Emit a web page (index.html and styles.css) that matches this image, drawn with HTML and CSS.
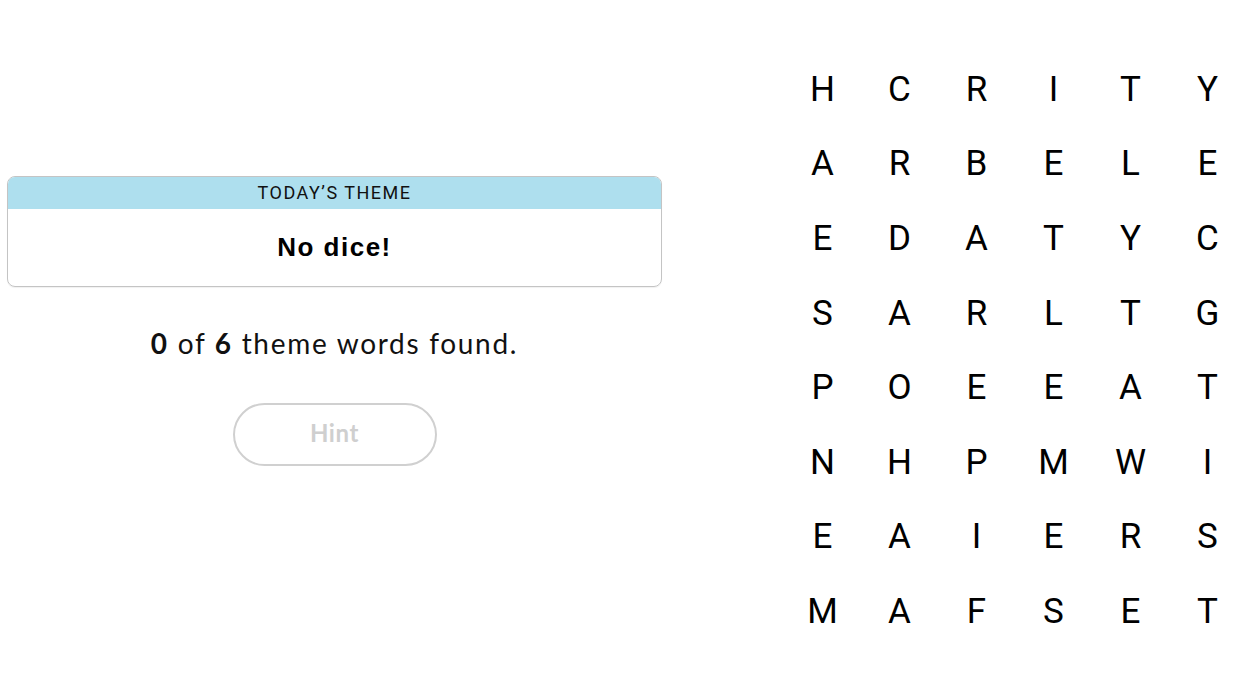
FILE: index.html
```html
<!DOCTYPE html>
<html>
<head>
<meta charset="utf-8">
<link rel="stylesheet" href="styles.css">
</head>
<body>
<div class="page">
  <section class="left">
    <div class="theme-card">
      <div class="theme-head">TODAY’S THEME</div>
      <div class="theme-body">No dice!</div>
    </div>
    <p class="progress"><b>0</b> of <b>6</b> theme words found.</p>
    <button class="hint">Hint</button>
  </section>
  <section class="board">
    <span>H</span><span>C</span><span>R</span><span>I</span><span>T</span><span>Y</span>
    <span>A</span><span>R</span><span>B</span><span>E</span><span>L</span><span>E</span>
    <span>E</span><span>D</span><span>A</span><span>T</span><span>Y</span><span>C</span>
    <span>S</span><span>A</span><span>R</span><span>L</span><span>T</span><span>G</span>
    <span>P</span><span>O</span><span>E</span><span>E</span><span>A</span><span>T</span>
    <span>N</span><span>H</span><span>P</span><span>M</span><span>W</span><span>I</span>
    <span>E</span><span>A</span><span>I</span><span>E</span><span>R</span><span>S</span>
    <span>M</span><span>A</span><span>F</span><span>S</span><span>E</span><span>T</span>
  </section>
</div>
</body>
</html>
```

FILE: styles.css
```css
html, body {
  margin: 0;
  padding: 0;
  background: #fff;
  color: #000;
}
.page {
  display: flex;
  align-items: flex-start;
  padding-left: 7px;
  gap: 122px;
  width: 1250px;
  height: 694px;
  box-sizing: border-box;
}
.left {
  width: 655px;
  padding-top: 176px;
  display: flex;
  flex-direction: column;
  align-items: center;
}
.theme-card {
  width: 100%;
  box-sizing: border-box;
  border: 1px solid #c4c4c4;
  border-radius: 8px;
  overflow: hidden;
  height: 111px;
  box-shadow: 0 1px 1px rgba(0,0,0,0.06);
}
.theme-head {
  background: #aedfee;
  height: 32px;
  line-height: 32px;
  text-align: center;
  font-family: "Roboto", "Liberation Sans", sans-serif;
  font-size: 18px;
  letter-spacing: 1.5px;
  color: #111;
}
.theme-body {
  height: 77px;
  display: flex;
  align-items: center;
  justify-content: center;
  font-family: "Liberation Sans", "Roboto", sans-serif;
  font-weight: 700;
  font-size: 26px;
  letter-spacing: 1.5px;
  padding-bottom: 2px;
}
.progress {
  margin: 40px 0 0;
  font-family: "Lato", "Liberation Sans", sans-serif;
  font-size: 28px;
  line-height: 32px;
  letter-spacing: 1.7px;
  color: #111;
}
.progress b {
  font-weight: 700;
}
.hint {
  margin-top: 44px;
  width: 204px;
  height: 63px;
  border: 2px solid #d0d0d0;
  border-radius: 32px;
  background: #fff;
  font-family: "Lato", "Liberation Sans", sans-serif;
  font-weight: 700;
  font-size: 24px;
  letter-spacing: 0.6px;
  color: #cfcfcf;
  padding: 0 0 5px;
}
.board {
  display: grid;
  grid-template-columns: repeat(6, 77px);
  grid-auto-rows: 74.6px;
  padding-top: 52px;
}
.board span {
  display: flex;
  align-items: center;
  justify-content: center;
  font-family: "Roboto", "Liberation Sans", sans-serif;
  font-size: 35px;
  font-weight: 400;
  color: #000;
}
```
